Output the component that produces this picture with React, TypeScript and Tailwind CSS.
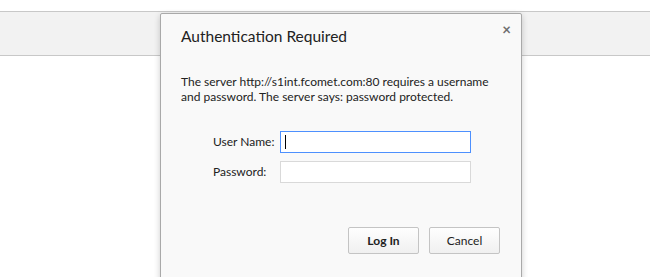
export default function App() {
  return (
    <div
      className="relative h-[277px] w-[650px] overflow-hidden bg-white"
      style={{ fontFamily: 'Lato, "Open Sans", sans-serif' }}
    >
      <div className="h-[11px]" />
      <div className="h-[45px] border-y border-[#c8c8c8] bg-[#f2f2f2]" />

      <div className="absolute left-[160px] top-[13px] h-[280px] w-[362px] rounded-t-[2px] border border-[#a9a9a9] bg-[#f9f9f9] shadow-[0_2px_6px_rgba(0,0,0,0.2)]">
        <button className="absolute right-[10px] top-[8px] text-[15px] font-bold leading-none text-[#6e6e6e]">
          ×
        </button>
        <div className="px-[20px] pt-[11px]">
          <h1 className="text-[15.5px] leading-[22px] text-[#222]">Authentication Required</h1>
          <p className="mt-[27px] text-[12px] leading-[15px] text-[#222]">
            The server http://s1int.fcomet.com:80 requires a username and password. The server says: password protected.
          </p>
          <div className="mt-[27px] grid grid-cols-[67px_191px] grid-rows-[22px_22px] items-center gap-y-[8px] pl-[32px]">
            <label className="text-[12px] leading-[16px] text-[#222]">User Name:</label>
            <div className="flex h-[22px] items-center border border-[#4d90fe] bg-white px-[4px]">
              <div className="h-[14px] w-px bg-black" />
            </div>
            <label className="text-[12px] leading-[16px] text-[#222]">Password:</label>
            <div className="h-[22px] border border-[#d9d9d9] bg-white" />
          </div>
          <div className="mt-[44px] flex justify-end gap-[10px] pr-[1px]">
            <button className="h-[27px] w-[71px] rounded-[2px] border border-[#c4c4c4] bg-gradient-to-b from-[#fefefe] to-[#f0f0f0] text-[12px] font-bold text-[#222]">
              Log In
            </button>
            <button className="h-[27px] w-[71px] rounded-[2px] border border-[#c4c4c4] bg-gradient-to-b from-[#fefefe] to-[#f0f0f0] text-[12px] text-[#222]">
              Cancel
            </button>
          </div>
        </div>
      </div>
    </div>
  );
}
